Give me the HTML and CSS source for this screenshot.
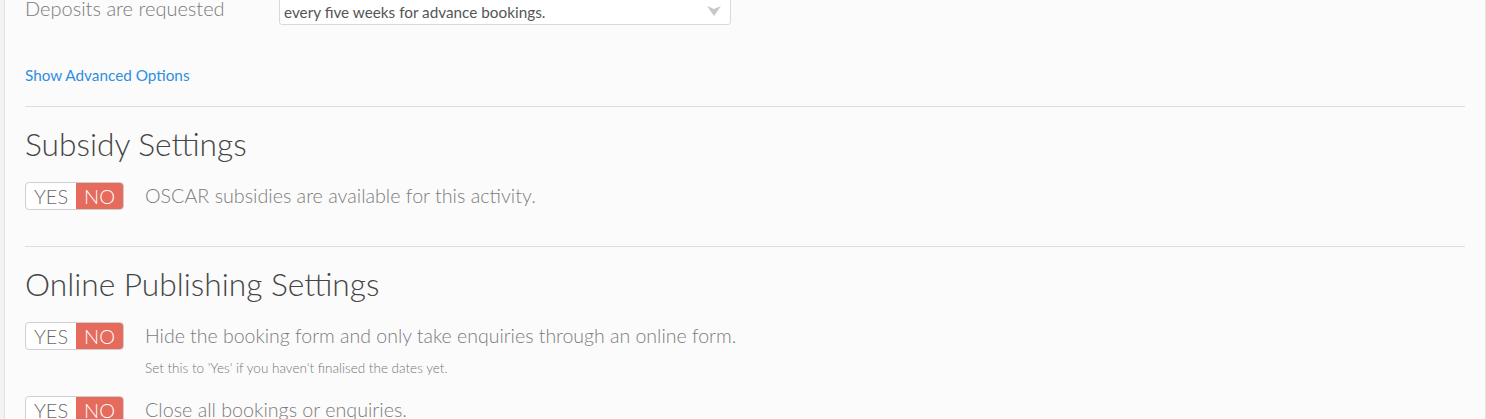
FILE: index.html
```html
<!DOCTYPE html>
<html>
<head>
<meta charset="utf-8">
<link rel="stylesheet" href="styles.css">
</head>
<body>
<div class="page">
  <div class="panel">
    <div class="field-row">
      <div class="field-label">Deposits are requested</div>
      <div class="select">
        <span class="select-text">every five weeks for advance bookings.</span>
        <svg class="select-arrow" width="14" height="10" viewBox="0 0 14 10"><path d="M0 0 L7 3 L14 0 L7 10 Z" fill="#c8c8c8"/></svg>
      </div>
    </div>
    <a class="advanced" href="#">Show Advanced Options</a>
    <hr class="divider">
    <section class="section">
      <h2 class="section-title">Subsidy Settings</h2>
      <div class="option">
        <div class="toggle"><span class="t-yes">YES</span><span class="t-no">NO</span></div>
        <div class="option-body">
          <div class="option-text">OSCAR subsidies are available for this activity.</div>
        </div>
      </div>
    </section>
    <hr class="divider divider-2">
    <section class="section">
      <h2 class="section-title">Online Publishing Settings</h2>
      <div class="option">
        <div class="toggle"><span class="t-yes">YES</span><span class="t-no">NO</span></div>
        <div class="option-body">
          <div class="option-text option-text-narrow">Hide the booking form and only take enquiries through an online form.</div>
          <div class="option-hint">Set this to 'Yes' if you haven't finalised the dates yet.</div>
        </div>
      </div>
      <div class="option option-last">
        <div class="toggle"><span class="t-yes">YES</span><span class="t-no">NO</span></div>
        <div class="option-body">
          <div class="option-text">Close all bookings or enquiries.</div>
        </div>
      </div>
    </section>
  </div>
</div>
</body>
</html>
```

FILE: styles.css
```css
html, body {
  margin: 0;
  padding: 0;
  background: #f3f3f3;
  font-family: "Lato", "Liberation Sans", sans-serif;
  overflow: hidden;
}
.page {
  height: 419px;
  padding-left: 4px;
}
.panel {
  background: #fbfbfb;
  border-left: 1px solid #e0e0e0;
  border-right: 1px solid #e0e0e0;
  width: 1482px;
  height: 419px;
  box-sizing: border-box;
  padding: 0 20px 0 20px;
  overflow: hidden;
}
.field-row {
  display: flex;
  align-items: flex-end;
  margin-top: -8px;
  height: 33px;
}
.field-label {
  width: 254px;
  font-weight: 300;
  font-size: 20px;
  color: #7a7a7a;
  line-height: 24px;
  padding-bottom: 5px;
}
.select {
  width: 452px;
  height: 34px;
  box-sizing: border-box;
  border: 1px solid #d9d9d9;
  border-radius: 3px;
  background: #fff;
  display: flex;
  align-items: center;
  justify-content: space-between;
  padding: 8px 9px 0 4px;
}
.select-text {
  font-size: 15.3px;
  color: #555;
}
.select-arrow {
  margin-top: -2px;
}
.advanced {
  display: block;
  margin-top: 41px;
  font-size: 15.3px;
  color: #2f8fdb;
  text-decoration: none;
  line-height: 18px;
}
.divider {
  border: 0;
  border-top: 1px solid #dedede;
  margin: 22px 0 0 0;
}
.divider-2 {
  margin-top: 36px;
}
.section-title {
  margin: 18px 0 0 0;
  font-weight: 300;
  font-size: 31.7px;
  line-height: 38px;
  color: #454545;
}
.option {
  display: flex;
  align-items: flex-start;
  gap: 21px;
  margin-top: 19px;
}
.section .option-last {
  margin-top: 20px;
}
.toggle {
  display: flex;
  width: 99px;
  height: 28px;
  box-sizing: border-box;
  border: 1px solid #cfcfcf;
  border-radius: 4px;
  background: #fff;
  overflow: hidden;
  flex-shrink: 0;
  font-weight: 300;
  font-size: 20px;
  line-height: 26px;
}
.t-yes {
  width: 50px;
  text-align: center;
  color: #6a6a6a;
}
.t-no {
  flex: 1;
  text-align: center;
  background: #e56b5d;
  color: #fff;
}
.option-body {
  padding-top: 1px;
}
.option-text {
  font-weight: 300;
  font-size: 19.7px;
  line-height: 26px;
  color: #7c7c7c;
}
.option-text-narrow {
  font-size: 19.5px;
}
.option-hint {
  margin-top: 11px;
  font-weight: 300;
  font-size: 13.5px;
  line-height: 16px;
  color: #777;
}
```
